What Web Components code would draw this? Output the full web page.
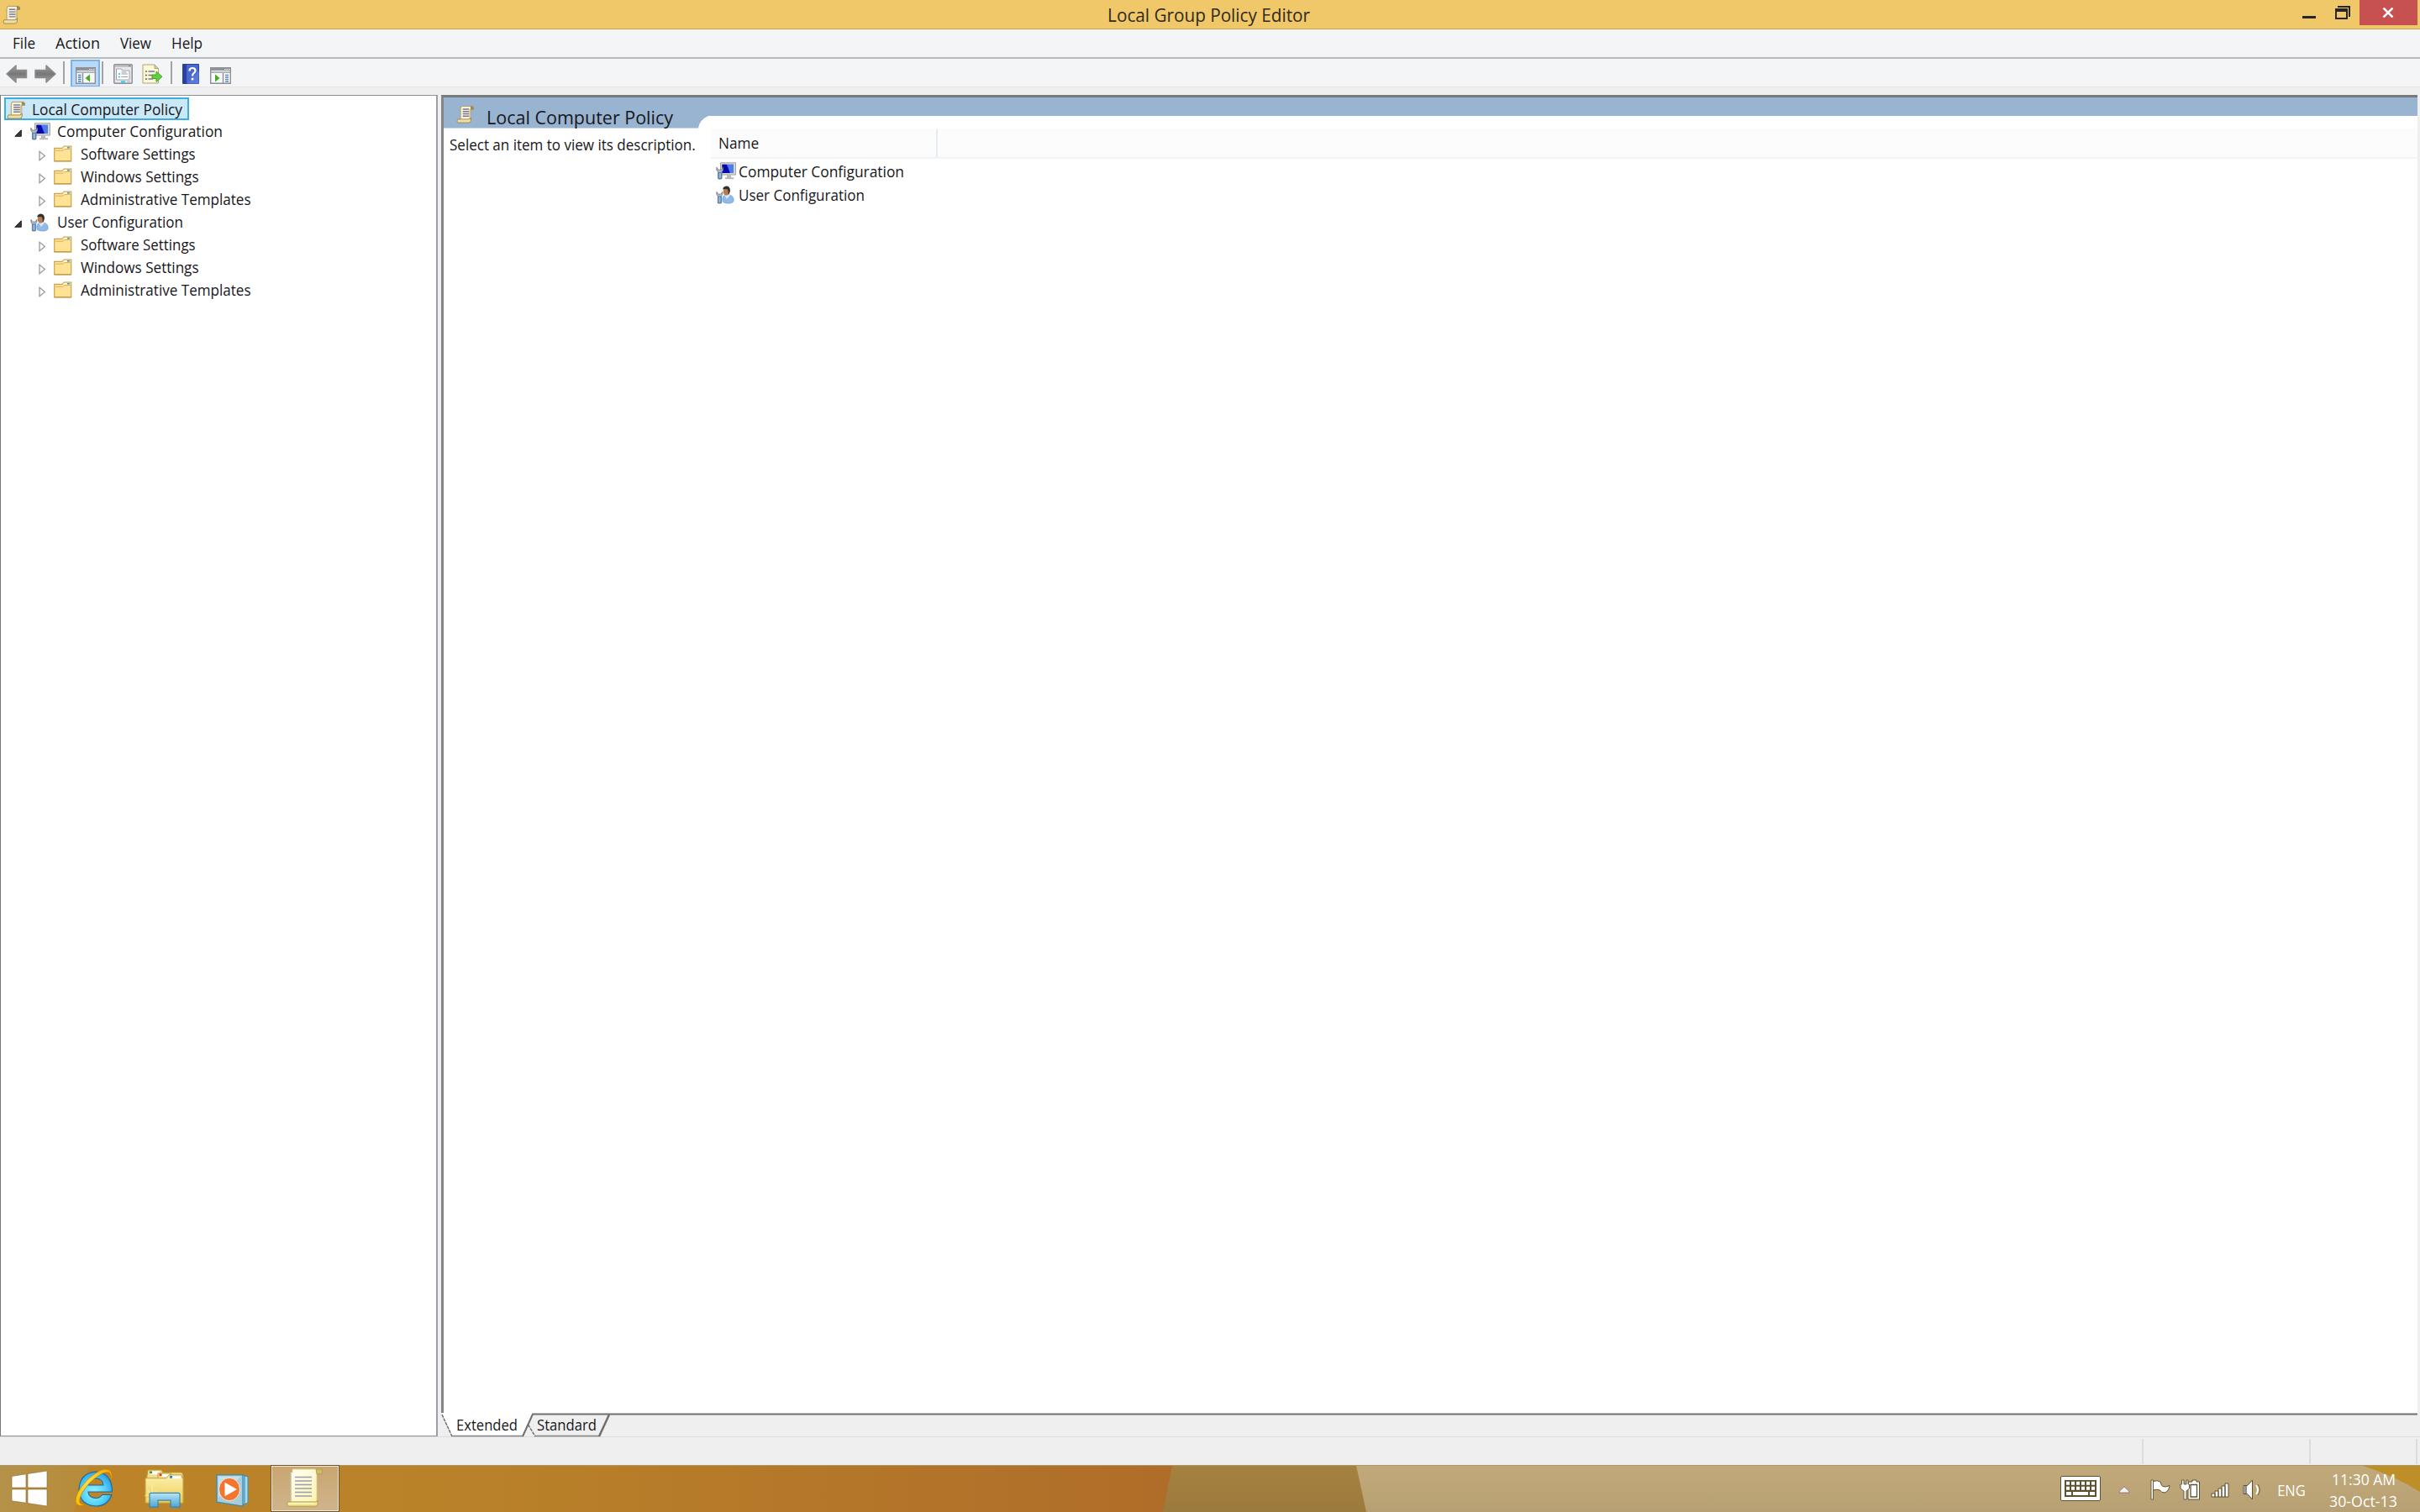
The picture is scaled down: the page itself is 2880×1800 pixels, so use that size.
<!DOCTYPE html>
<html lang="en">
<head>
<meta charset="utf-8">
<title>Local Group Policy Editor</title>
<style>
  html, body { margin: 0; width: 2880px; height: 1800px; overflow: hidden; }
  body {
    font-family: "Open Sans", "Noto Sans", sans-serif;
    font-size: 18px;
    color: #17171c;
    background: #efefef;
    display: flex;
    flex-direction: column;
  }
</style>
</head>
<body>
<gp-window>
  <gp-titlebar slot="title">Local Group Policy Editor</gp-titlebar>
  <gp-menubar slot="menu"></gp-menubar>
  <gp-toolbar slot="tools"></gp-toolbar>
  <gp-tree slot="tree">
    <gp-node selected icon="scroll" w="179">Local Computer Policy</gp-node>
    <gp-node level="1" open icon="computer" w="195">Computer Configuration</gp-node>
    <gp-node level="2" icon="folder" w="136">Software Settings</gp-node>
    <gp-node level="2" icon="folder" w="140">Windows Settings</gp-node>
    <gp-node level="2" icon="folder" w="202">Administrative Templates</gp-node>
    <gp-node level="1" open icon="user" w="148">User Configuration</gp-node>
    <gp-node level="2" icon="folder" w="136">Software Settings</gp-node>
    <gp-node level="2" icon="folder" w="140">Windows Settings</gp-node>
    <gp-node level="2" icon="folder" w="202">Administrative Templates</gp-node>
  </gp-tree>
  <gp-details slot="details"></gp-details>
</gp-window>
<gp-taskbar></gp-taskbar>

<script>
// All drawings: [viewBox, markup]
const ICONS = {
  scroll: ['0 0 24 24', `
    <path d="M6.500 1.500h14q2.500 1 1.500 4h-3.500V20H5.500V5z" fill="#f9f1d3" stroke="#a8966c"/>
    <path d="M18.500 1.500q4.500-1 4.500 4.500h-4.500z" fill="#a08853"/>
    <path d="M17.500 6v13" stroke="#d9c48a" stroke-width="1.500"/>
    <path d="M2 18.500h13.500q3.500 0 3.500-2v3.500q0 3-3 3H2q-2-2 0-4.500z" fill="#efdfa6" stroke="#9c8751"/>
    <path d="M8.500 5.500h8M8.500 8.500h8M8.500 11.500h8M8.500 14.500h8" stroke="#757b9c" stroke-width="1.500"/>`],
  computer: ['0 0 24 22', `
    <path d="M5.500 .8h18v15h-18z" fill="#d5d5d2" stroke="#a6a6a0"/>
    <path d="M7.500 3h13.500v10.500H7.500z" fill="#1820c8"/><path d="M13 3h8v10.500h-4z" fill="#4c7cf0"/><path d="M7.500 3h5l4 10.500h-9z" fill="#0808a8"/>
    <path d="M13 16h5v3h3v2.200H11v-2.200h2z" fill="#b9b9b5"/>
    <path d="M.8 6.500q-.8 4 1.700 5.500v8.500q1.700 1.500 4.500 0V12q2.500-1.500 1.300-5.500L7 9.500H2.800z" fill="#b4bcc6" stroke="#6d7581" stroke-width=".8"/>
    <path d="M3 13h3.600v7.500H3z" fill="#8fb9e2" stroke="#44699a" stroke-width=".8"/>`],
  user: ['0 0 24 24', `
    <path d="M9 21q-2-8 4-9h5q5 2 5 7 0 3.500-6 4-6 0-8-2z" fill="#8dbcea" stroke="#6c98c6" stroke-width=".8"/>
    <path d="M11 12l3 5.500 4.500-5-2-2.500z" fill="#d7e8f8"/>
    <ellipse cx="13.500" cy="7.500" rx="4" ry="5.300" fill="#b57b52"/>
    <path d="M9 5q0-4 4.500-4.500 5 0 5 6-1 5-2.500 5 .5-6-1.500-7-3-.5-5.500.5z" fill="#36302e"/>
    <path d="M1 8q-.8 4 1.500 5.500v9q2 1 4.500 0v-9q2.300-1.500 1.500-5.500l-1.800 3H2.800z" fill="#b9c2cd" stroke="#626c7a" stroke-width=".8"/>
    <path d="M3 14h3.600v8.500H3z" fill="#8fb9e2" stroke="#44699a" stroke-width=".8"/>`],
  folder: ['0 0 22 21', `
    <path d="M.7 3.500h9.500l2-2.500h8.500v19H.7z" fill="#ffe294" stroke="#c9a352" stroke-width="1.2"/>
    <path d="M12 2h7.500v2.500h-9z" fill="#fff6d8"/><path d="M16 2h3v1.800h-3z" fill="#4b9ad4"/>
    <path d="M2 6.500h9l1.500-1.700h7" stroke="#d5af5c" fill="none"/>
    <path d="M.7 19.700h20" stroke="#c0953f" stroke-width="1.200"/>`],
  open: ['0 0 9 9', `<path d="M8.300 .8v7.500H.8z" fill="#3a3a3a" stroke="#222"/>`],
  closed: ['0 0 9 13', `<path d="M1 1.300v10.400L7.400 6.500z" fill="#fff" stroke="#9c9c9c" stroke-width="1.300"/>`],
  back: ['0 0 26 22', `<defs><linearGradient id="g" x2="0" y2="1"><stop stop-color="#a0a0a0"/><stop offset=".5" stop-color="#777"/><stop offset="1" stop-color="#a3a3a3"/></linearGradient></defs>
    <path d="M1 11L12 1v5.500h12.500v9H12V21z" fill="url(#g)" stroke="#8b8b8b" stroke-width="1.500" stroke-linejoin="round"/>`],
  forward: ['0 0 26 22', `<defs><linearGradient id="g" x2="0" y2="1"><stop stop-color="#a0a0a0"/><stop offset=".5" stop-color="#777"/><stop offset="1" stop-color="#a3a3a3"/></linearGradient></defs>
    <path d="M25 11L14 1v5.500H1v9h13V21z" fill="url(#g)" stroke="#8b8b8b" stroke-width="1.500" stroke-linejoin="round"/>`],
  paneLeft: ['0 0 24 20', `
    <path d="M.7 .7h22.600v18.600H.7z" fill="#f8f8f8" stroke="#8a9098" stroke-width="1.400"/>
    <path d="M1 1h22v3H1z" fill="#8d939b"/><path d="M16 2.500h1.500M18.500 2.500H20M21 2.500h1.500" stroke="#fff"/>
    <path d="M1 6h22" stroke="#9aa0a8" stroke-width="1.500"/><path d="M8.500 7v12" stroke="#8a9098" stroke-width="1.400"/>
    <path d="M3 9.500h3.500M3 12h3.500M3 14.500h3.500M3 17h3.500" stroke="#3f7fc4" stroke-width="1.300"/>
    <path d="M17 8.500v9L11.500 13z" fill="#45ac20"/>`],
  paneRight: ['0 0 25 20', `
    <path d="M.7 .7h23.600v18.600H.7z" fill="#f8f8f8" stroke="#8a9098" stroke-width="1.400"/>
    <path d="M1 1h23v3H1z" fill="#8d939b"/><path d="M17 2.500h1.500M19.500 2.500H21M22 2.500h1.500" stroke="#fff"/>
    <path d="M1 6h23" stroke="#9aa0a8" stroke-width="1.500"/><path d="M15.500 7v12" stroke="#8a9098" stroke-width="1.400"/>
    <path d="M18 9.500h4M18 12h4M18 14.500h4M18 17h4" stroke="#5e88b8" stroke-width="1.300"/>
    <path d="M6 8.500v9l5.500-4.500z" fill="#45ac20"/>`],
  props: ['0 0 23 24', `
    <rect x=".8" y=".8" width="21.400" height="22.400" rx="1" fill="#e6e8ea" stroke="#8c9095" stroke-width="1.500"/>
    <path d="M2 2.500h19" stroke="#b0b4b8" stroke-width="2"/><path d="M18 2.500h2.500" stroke="#666"/>
    <path d="M3.500 6h6l1 2h8.500v11h-15.500z" fill="#fff" stroke="#a0a4aa"/>
    <path d="M6 12h2M6 15.500h2" stroke="#39b8dc" stroke-width="1.500"/><path d="M9.500 12H17M9.500 15.500H17M9.500 10h6" stroke="#959ba3" stroke-width="1.100"/>
    <path d="M9 21.500h5" stroke="#25c8f0" stroke-width="2"/><path d="M16 21.500h4" stroke="#c2c5c8" stroke-width="2"/>`],
  exportList: ['0 0 25 24', `
    <path d="M1 1h14l4.500 4.500V23H1z" fill="#fdf8d4" stroke="#aaa58a"/><path d="M15 1v4.500h4.500z" fill="#d6d0ae" stroke="#aaa58a"/>
    <path d="M4 9h1.800M4 13.500h1.800M4 18h1.800" stroke="#555" stroke-width="1.600"/><path d="M7.500 9H15M7.500 13.500H12M7.500 18H13" stroke="#77779a" stroke-width="1.300"/>
    <path d="M12 13h5V9l7 6.300-7 6.200v-4h-5z" fill="#5fd13c" stroke="#43a828"/>`],
  help: ['0 0 20 24', `
    <path d="M.5 .5h19v23H.5z" fill="#4a66cf" stroke="#2b3f9c"/><path d="M1 1h4v22H1z" fill="#2a3f9f"/>
    <path d="M5 24L20 8v16z" fill="#6c87e3" opacity=".5"/>
    <path d="M8.500 8.500q0-3.500 3.500-3.500t3.500 3q0 2-2 3.200-1.500 1-1.500 3.300" fill="none" stroke="#fff" stroke-width="2.200"/><circle cx="12" cy="18" r="1.500" fill="#fff"/>`],
  min: ['0 0 16 3', `<path d="M0 0h16v3H0z" fill="#262626"/>`],
  restore: ['0 0 18 16', `<path d="M3 0h15v13h-2V2H3z" fill="#262626"/><path d="M0 3h15v13H0zM2 7v7h11V7z" fill="#262626" fill-rule="evenodd"/>`],
  close: ['0 0 14 12', `<path d="M1.500 0.500L12.500 11.500M12.500 0.500L1.500 11.500" stroke="#fff" stroke-width="2.500"/>`],
  start: ['0 0 44 44', `<path d="M1 7.500L18 4.800V21H1zM20 4.500L43 1v20H20zM1 23h17v16.200L1 36.800zM20 23h23v20L20 39.600z" fill="#fff" stroke="#8a6a28" stroke-width=".6"/>`],
  ie: ['0 0 46 46', `
    <defs><radialGradient id="b" cx=".45" cy=".6" r=".6"><stop stop-color="#9cf4ff"/><stop offset=".6" stop-color="#52d2fa"/><stop offset="1" stop-color="#2f9fe0"/></radialGradient>
    <linearGradient id="y" x1="1" x2="0" y2="1"><stop stop-color="#f5a800"/><stop offset=".5" stop-color="#ffe040"/><stop offset="1" stop-color="#f8b800"/></linearGradient></defs>
    <path d="M44.500 28H16q.5 7 9 7.500 5 0 7.500-4H44q-5 13.500-19 13.500-19.500-1-20-20Q6 5.500 25 4q19.500 1.500 19.500 24zM16 20h18q-.5-8-9-8-8 0-9 8z" fill="url(#b)" stroke="#1767a5" stroke-width="1.100"/>
    <path d="M44 12.500Q46 1 36 1 27 2 14 15 0 30 1 40q1.500 7 13 3-8 1-8.500-4Q6 30 18 17 31 5 38 4.500q6 0 5 8z" fill="url(#y)" stroke="#c28400" stroke-width=".7"/>`],
  explorer: ['0 0 48 48', `
    <defs><linearGradient id="f" x2="0" y2="1"><stop stop-color="#faf0ae"/><stop offset="1" stop-color="#f0cf53"/></linearGradient>
    <linearGradient id="s" x2="0" y2="1"><stop stop-color="#b8e4f4"/><stop offset="1" stop-color="#4fa5d4"/></linearGradient></defs>
    <path d="M3 8l1-7h16l2 3h21q3 0 3 4v8H2z" fill="#eedd90" stroke="#bd982c"/>
    <path d="M6 2.500h12v4H6z" fill="#fff"/><path d="M6 2.500h3v2.800H6z" fill="#3a9a3c"/>
    <path d="M16 5h15l2 3v8H16z" fill="#f6e8a8" stroke="#bd982c"/><path d="M17.500 6h12v3h-12z" fill="#fff"/><path d="M17.500 5.500h3v3h-3z" fill="#e03a1c"/>
    <path d="M1 11h25l3-4h15l1 4h1v30H1z" fill="url(#f)" stroke="#c4a038"/>
    <path d="M30 8.500h13v3H30z" fill="#fff"/><path d="M30 8h3v3h-3z" fill="#2c86cc"/>
    <path d="M9 18v26M0 32l18-2M3 25l12 13M15 25L3 38" stroke="#fffde0" stroke-width=".8" opacity=".8"/><circle cx="9" cy="31" r="3" fill="#fffde0" opacity=".7"/>
    <path d="M6 46V31q0-2 2-2h32q2 0 2 2v15H31v-8H16v8z" fill="url(#s)" stroke="#3587b5" stroke-width="1.200"/>`],
  player: ['0 0 40 42', `
    <path d="M30 2l8 2v32l-8 3z" fill="#a8dbef" stroke="#3b8bb0"/><path d="M34 3v34" stroke="#3b8bb0" stroke-width="1.200"/>
    <path d="M1 2h31v38L1 35z" fill="#a9cddb" stroke="#3b8bb0" stroke-width="1.300"/><path d="M2.500 3.500H30L3 30z" fill="#d0e8ef" opacity=".7"/>
    <ellipse cx="16" cy="19.500" rx="12.500" ry="14" fill="#f4752b" stroke="#e8eef0" stroke-width="1"/>
    <path d="M10.500 11v17L25 19.500z" fill="#fff"/>`],
  bigScroll: ['0 0 44 46', `
    <defs><linearGradient id="p" x2="1" y2="1"><stop stop-color="#fffff4"/><stop offset="1" stop-color="#fdf3a9"/></linearGradient></defs>
    <path d="M7 1h34q3 2 1 6h-6v33H5V5h2z" fill="url(#p)" stroke="#d9cc83" stroke-width=".8"/>
    <path d="M35 1h7q2 3 0 6h-6z" fill="#d1bd62" stroke="#9e8c3f" stroke-width=".7"/>
    <path d="M5 6v33" stroke="#b6b4ae"/>
    <path d="M1 40h33q3 0 3-2v5q0 2-3 2H1z" fill="#f6e996" stroke="#a89337" stroke-width=".8"/><path d="M2 41.500h31" stroke="#fffbd8"/>
    <path d="M10 10.500h20M10 15h20M10 19.500h20M10 24h20M10 28.500h20M10 33h20" stroke="#9c9cae" stroke-width="1.500"/>`],
  keyboard: ['0 0 48 30', `
    <rect x=".5" y=".5" width="47" height="29" rx="1.500" fill="#fff" stroke="#5e5130"/>
    <path d="M5 5h38v20H5z" fill="#5e5130"/>
    <path d="M7 8.800h34M7 14.800h34" stroke="#fff" stroke-width="4" stroke-dasharray="4 2"/>
    <path d="M7 21h6M15 21h18M35 21h6" stroke="#fff" stroke-width="4"/>`],
  chevron: ['0 0 14 9', `<path d="M7 .8L13 6.500v1.500H1V6.500z" fill="#eef1f8" stroke="#7d704c" stroke-width=".8"/>`],
  flag: ['0 0 24 25', `
    <path d="M3.500 2.500q5-2 9 1 0 4 2.500 5 3 1.500 8-1-1 7-6 8.500-4 0-5.500-3-4-1.500-8 0z" fill="#fff" stroke="#5e5130"/>
    <path d="M1 1h2.500v23H1z" fill="#fff" stroke="#5e5130" stroke-width=".9"/>`],
  battery: ['0 0 25 25', `
    <path d="M12 3h3V1h5v2h3.500v21H10V4z" fill="#fff" stroke="#5e5130"/><path d="M13 6.500h7.500v14.500H13z" fill="#fff" stroke="#5e5130" stroke-width="1.300"/>
    <path d="M2.500 1h2.500v5h3V1h2v5h1.500v5L8 14v10H5V14L1 11V6h1.500z" fill="#fff" stroke="#5e5130" stroke-width=".9"/>`],
  signal: ['0 0 22 18', `<path d="M1 13h4v4H1zM5 10h4v7H5zM9 7h4v10H9zM13 4h4v13h-4zM17 1h4v16h-4z" fill="#fff" stroke="#5e5130"/>`],
  speaker: ['0 0 22 25', `
    <path d="M1 7.500h4.500L11.500 1v23L5.500 17.500H1z" fill="#fff" stroke="#5e5130"/><path d="M3.500 8v9" stroke="#8a8fa0" stroke-width="3"/>
    <path d="M16 7q4 5.500 0 11" fill="none" stroke="#fff" stroke-width="2"/><path d="M18 6q4.500 6.500 0 13" fill="none" stroke="#5e5130" stroke-width=".8"/>`]
};

class Icon extends HTMLElement {
  connectedCallback() {
    if (this.shadowRoot) return;
    const [box, art] = ICONS[this.getAttribute('name')];
    const [, , bw, bh] = box.split(' ');
    this.attachShadow({ mode: 'open' });
    this.shadowRoot.innerHTML = `
      <style>
        :host { display: block; flex: none; }
        svg { display: block; }
      </style>
      <svg width="${this.getAttribute('w') || bw}" height="${this.getAttribute('h') || bh}" viewBox="${box}" preserveAspectRatio="none">${art}</svg>
    `;
  }
}

// One line of text, stretched so that its ink is exactly w pixels wide
class Label extends HTMLElement {
  connectedCallback() {
    if (this.shadowRoot) return;
    const w = Number(this.getAttribute('w'));
    this.attachShadow({ mode: 'open' });
    this.shadowRoot.innerHTML = `
      <style>
        :host { display: block; flex: none; width: ${w}px; white-space: nowrap; }
        span { display: inline-block; transform-origin: 0 50%; }
      </style>
      <span><slot></slot></span>
    `;
    const css = getComputedStyle(this);
    const ctx = document.createElement('canvas').getContext('2d');
    ctx.font = `${css.fontWeight} ${css.fontSize} ${css.fontFamily}`;
    const m = ctx.measureText(this.textContent.trim());
    const scale = w / (m.actualBoundingBoxRight + m.actualBoundingBoxLeft);
    this.shadowRoot.querySelector('span').style.transform =
      `translateX(${m.actualBoundingBoxLeft * scale}px) scaleX(${scale})`;
  }
}

class PolicyWindow extends HTMLElement {
  constructor() {
    super();
    this.attachShadow({ mode: 'open' });
    this.shadowRoot.innerHTML = `
      <style>
        :host { display: flex; flex-direction: column; height: 1745px; background: #efefef; box-sizing: border-box; border-bottom: 1px solid #a79a70; }
        .band { height: 10px; border-top: 1px solid #e4e4e4; box-sizing: border-box; }
        .client { display: flex; gap: 4px; height: 1598px; padding-right: 3px; }
        .status { flex: 1; display: flex; justify-content: flex-end; padding: 2px 3px 1px 0; border-top: 1px solid #dcdcdc; margin-top: -1px; }
        .status div { border-left: 2px solid #dcdcdc; box-sizing: border-box; }
        .status div:last-child { border-right: 2px solid #dcdcdc; }
      </style>
      <slot name="title"></slot>
      <slot name="menu"></slot>
      <slot name="tools"></slot>
      <div class="band"></div>
      <div class="client">
        <slot name="tree"></slot>
        <slot name="details"></slot>
      </div>
      <div class="status">
        <div style="width:199px"></div>
        <div style="width:129px"></div>
      </div>
    `;
  }
}

class TitleBar extends HTMLElement {
  connectedCallback() {
    if (this.shadowRoot) return;
    this.attachShadow({ mode: 'open' });
    this.shadowRoot.innerHTML = `
      <style>
        :host { display: grid; grid-template-columns: 1320px 1fr auto; height: 35px; box-sizing: border-box; background: #f0c869; border-bottom: 1px solid #c5a353; }
        .app { margin: 6px 0 0 3px; }
        gp-label { font-size: 22px; line-height: 36px; color: #2e2a20; margin-top: -1px; }
        .buttons { display: flex; padding-right: 3px; }
        .close { background: #c75050; width: 69px; height: 30px; padding: 9px 0 0 27px; box-sizing: border-box; margin-left: 11px; }
      </style>
      <gp-icon class="app" name="scroll" w="22" h="23"></gp-icon>
      <gp-label w="239">${this.textContent}</gp-label>
      <div class="buttons">
        <gp-icon name="min" style="margin-top:19px"></gp-icon>
        <gp-icon name="restore" style="margin:7px 0 0 23px"></gp-icon>
        <div class="close"><gp-icon name="close"></gp-icon></div>
      </div>
    `;
  }
}

class MenuBar extends HTMLElement {
  constructor() {
    super();
    this.attachShadow({ mode: 'open' });
    this.shadowRoot.innerHTML = `
      <style>
        :host { display: flex; height: 35px; box-sizing: border-box; padding-left: 16px; line-height: 32px; background: #f4f5f7; border-bottom: 2px solid #b9babc; }
      </style>
      <gp-label w="26">File</gp-label>
      <gp-label w="52" style="margin-left:24px">Action</gp-label>
      <gp-label w="37" style="margin-left:25px">View</gp-label>
      <gp-label w="36" style="margin-left:25px">Help</gp-label>
    `;
  }
}

class ToolBar extends HTMLElement {
  constructor() {
    super();
    this.attachShadow({ mode: 'open' });
    this.shadowRoot.innerHTML = `
      <style>
        :host { display: flex; align-items: center; height: 33px; padding-left: 7px; background: #f4f5f7; }
        i { width: 2px; height: 27px; background: #a2a3a5; }
        .on { width: 35px; height: 33px; box-sizing: border-box; border: 2px solid #7fb1e6; background: #b9d7f7; padding: 7px 0 0 4px; margin: 2px 2px 0 7px; }
      </style>
      <gp-icon name="back" style="margin-top:2px"></gp-icon>
      <gp-icon name="forward" style="margin:2px 0 0 8px"></gp-icon>
      <i style="margin-left:8px"></i>
      <div class="on"><gp-icon name="paneLeft"></gp-icon></div>
      <i></i>
      <gp-icon name="props" style="margin:2px 0 0 12px"></gp-icon>
      <gp-icon name="exportList" style="margin:2px 0 0 11px"></gp-icon>
      <i style="margin-left:9px"></i>
      <gp-icon name="help" style="margin:2px 0 0 12px"></gp-icon>
      <gp-icon name="paneRight" style="margin:6px 0 0 13px"></gp-icon>
    `;
  }
}

class Tree extends HTMLElement {
  constructor() {
    super();
    this.attachShadow({ mode: 'open' });
    this.shadowRoot.innerHTML = `
      <style>
        :host { display: block; flex: none; width: 521px; height: 1598px; box-sizing: border-box; background: #fff; border: 1px solid #828790; border-width: 1px 2px 2px 1px; border-color: #8a9098 #9a9fa8 #8f959c #73767e; padding: 2px 0 0 4px; }
      </style>
      <slot></slot>
    `;
  }
}

class TreeNode extends HTMLElement {
  connectedCallback() {
    if (this.shadowRoot) return;
    const level = Number(this.getAttribute('level') || 0);
    const open = this.hasAttribute('open');
    const text = this.textContent;
    const iconSize = { scroll: [23, 22], computer: [24, 21], user: [22, 22], folder: [22, 20] }[this.getAttribute('icon')];
    this.attachShadow({ mode: 'open' });
    this.shadowRoot.innerHTML = `
      <style>
        :host { display: flex; height: 27px; line-height: 27px; }
        .twist { display: flex; box-sizing: border-box; flex: none; }
        .l1 { width: 31px; padding: 11px 0 0 12px; }
        .l2 { width: 59px; padding: 9px 0 0 41px; }
        .item { display: flex; height: 27px; box-sizing: border-box; }
        .pic { width: 33px; flex: none; }
        .l2 + .item .pic { width: 32px; }
        :host([selected]) .item { width: 220px; border: 2px solid #3cade0; background: #cbe8f6; padding-left: 1px; line-height: 24px; }
        :host([selected]) .pic { width: 31px; }
      </style>
      ${level ? `<div class="twist l${level}"><gp-icon name="${open ? 'open' : 'closed'}"></gp-icon></div>` : ''}
      <div class="item">
        <div class="pic"><gp-icon name="${this.getAttribute('icon')}" w="${iconSize[0]}" h="${iconSize[1]}" style="margin-top:${level ? 3 : 2}px"></gp-icon></div>
        <gp-label w="${this.getAttribute('w')}">${text}</gp-label>
      </div>
    `;
  }
}

class Details extends HTMLElement {
  constructor() {
    super();
    this.attachShadow({ mode: 'open' });
    this.shadowRoot.innerHTML = `
      <style>
        :host { display: flex; flex-direction: column; flex: 1; height: 1598px; }
        .pane { display: grid; grid-template-columns: 303px 1fr; height: 1569px; box-sizing: border-box; background: #fff; border-top: 3px solid #77797b; border-left: 3px solid #858585; position: relative; }
        .side { display: flex; flex-direction: column; }
        .head { display: flex; height: 37px; background: #99b4d1; border-bottom: 1px solid #c9d8e8; box-sizing: border-box; padding-left: 15px; font-size: 22px; line-height: 46px; }
        .head gp-icon { margin: 9px 16px 0 0; }
        .desc { padding-left: 7px; line-height: 38px; }
        .main { border-top: 22px solid #99b4d1; }
        .corner { display: block; position: absolute; left: 303px; top: 21px; }
        .cols { display: flex; height: 34px; margin: 15px 0 0 15px; background: #fcfcfc; border-bottom: 2px solid #f0f4f9; line-height: 34px; }
        .cols div { width: 270px; padding-left: 10px; box-sizing: border-box; border-right: 2px solid #e4edf6; }
        .row { display: flex; height: 28px; padding-left: 21px; line-height: 28px; }
        .row .pic { width: 28px; }
        .tabs { position: relative; height: 29px; }
        .tabs svg { display: block; width: 2352px; height: 29px; }
        .names { position: absolute; left: 19px; top: 0; display: flex; gap: 24px; line-height: 29px; }
      </style>
      <div class="pane">
        <div class="side">
          <div class="head"><gp-icon name="scroll" w="22" h="22"></gp-icon><gp-label w="221">Local Computer Policy</gp-label></div>
          <div class="desc"><gp-label w="292">Select an item to view its description.</gp-label></div>
        </div>
        <div class="main">
          <div class="cols"><div><gp-label w="47">Name</gp-label></div></div>
          <div class="row" style="margin-top:1px"><div class="pic"><gp-icon name="computer" w="24" h="21" style="margin-top:3px"></gp-icon></div><gp-label w="195">Computer Configuration</gp-label></div>
          <div class="row"><div class="pic"><gp-icon name="user" w="22" h="22" style="margin-top:3px"></gp-icon></div><gp-label w="148">User Configuration</gp-label></div>
        </div>
        <svg class="corner" width="16" height="16"><path d="M0 0h16v1h-4Q1 6 0 15.500z" fill="#99b4d1"/></svg>
      </div>
      <div class="tabs">
        <svg viewBox="0 0 2352 29">
          <path d="M0 0h2352v1H108L97 28H13z" fill="#fff"/>
          <path d="M1 2L13 28" fill="none" stroke="#6f6f6f" stroke-width="1.500" stroke-dasharray="4 1"/>
          <path d="M13 27.500h84M112 27.500h77" stroke="#858585" stroke-width="1.500"/>
          <path d="M97 28L109 1.500H2352" fill="none" stroke="#6f6f6f" stroke-width="2"/>
          <path d="M103.500 14L112 28" stroke="#6f6f6f" stroke-width="1.500" stroke-dasharray="4 1"/>
          <path d="M188 28L200 2" stroke="#6f6f6f" stroke-width="2.500"/>
        </svg>
        <div class="names"><gp-label w="71">Extended</gp-label><gp-label w="70">Standard</gp-label></div>
      </div>
    `;
  }
}

class TaskBar extends HTMLElement {
  constructor() {
    super();
    this.attachShadow({ mode: 'open' });
    this.shadowRoot.innerHTML = `
      <style>
        :host { display: flex; justify-content: space-between; height: 55px; position: relative; color: #fff; font-size: 19px; }
        .wall { position: absolute; left: 0; top: 0; }
        .apps, .tray { display: flex; position: relative; }
        .active { width: 80px; height: 54px; box-sizing: border-box; border: 1px solid #f2e6d4; outline: 1px solid #6f5427; background: linear-gradient(#c9a671, #cfb48c); margin-left: 26px; padding: 2px 0 0 17px; }
        .clock { margin-left: 29px; width: 108px; }
        .clock gp-label { line-height: 26px; height: 26px; }
      </style>
      <svg class="wall" width="2880" height="55">
        <defs>
          <linearGradient id="a"><stop stop-color="#b4924a"/><stop offset="1" stop-color="#b78b38"/></linearGradient>
          <linearGradient id="b"><stop stop-color="#bd8428"/><stop offset=".2" stop-color="#b98129"/><stop offset=".48" stop-color="#b06d29"/><stop offset="1" stop-color="#b06d29"/></linearGradient>
          <linearGradient id="c" x2="0" y2="1"><stop stop-color="#a58240"/><stop offset="1" stop-color="#9b7a3d"/></linearGradient>
          <linearGradient id="d" x2="0" y2="1"><stop stop-color="#c1a97a"/><stop offset="1" stop-color="#b7a073"/></linearGradient>
        </defs>
        <path d="M0 0h2880v55H0z" fill="url(#b)"/>
        <path d="M0 0h106L88 55H0z" fill="url(#a)"/>
        <path d="M1395 0h219l12 55H1384z" fill="url(#c)"/>
        <path d="M1614 0h1266v55H1626z" fill="url(#d)"/>
        <path d="M2812 0h68v31Q2850 12 2812 0z" fill="#be8f29"/>
      </svg>
      <div class="apps">
        <gp-icon name="start" style="margin:5px 0 0 13px"></gp-icon>
        <gp-icon name="ie" style="margin:3px 0 0 32px"></gp-icon>
        <gp-icon name="explorer" style="margin:4px 0 0 37px" h="47"></gp-icon>
        <gp-icon name="player" style="margin:9px 0 0 37px" h="41"></gp-icon>
        <div class="active"><gp-icon name="bigScroll"></gp-icon></div>
      </div>
      <div class="tray">
        <gp-icon name="keyboard" style="margin:12px 0 0 0"></gp-icon>
        <gp-icon name="chevron" style="margin:24px 0 0 21px"></gp-icon>
        <gp-icon name="flag" style="margin:16px 0 0 24px"></gp-icon>
        <gp-icon name="battery" style="margin:16px 0 0 11px"></gp-icon>
        <gp-icon name="signal" style="margin:20px 0 0 12px"></gp-icon>
        <gp-icon name="speaker" style="margin:16px 0 0 16px"></gp-icon>
        <gp-label w="32" style="margin:9px 0 0 20px;line-height:40px">ENG</gp-label>
        <div class="clock">
          <gp-label w="74" style="margin:3px 0 0 4px">11:30 AM</gp-label>
          <gp-label w="80">30-Oct-13</gp-label>
        </div>
      </div>
    `;
  }
}

customElements.define('gp-icon', Icon);
customElements.define('gp-label', Label);
customElements.define('gp-window', PolicyWindow);
customElements.define('gp-titlebar', TitleBar);
customElements.define('gp-menubar', MenuBar);
customElements.define('gp-toolbar', ToolBar);
customElements.define('gp-tree', Tree);
customElements.define('gp-node', TreeNode);
customElements.define('gp-details', Details);
customElements.define('gp-taskbar', TaskBar);
</script>
</body>
</html>
